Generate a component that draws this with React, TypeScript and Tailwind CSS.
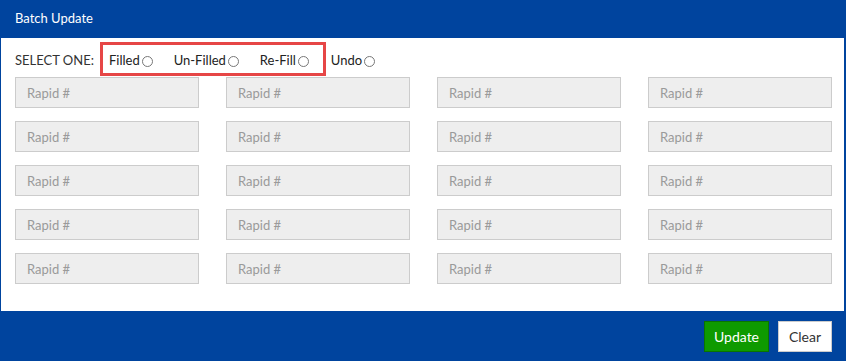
const rows = 5;
const cols = 4;

function RadioOption({ label }: { label: string }) {
  return (
    <label className="flex items-center gap-[2px] text-[13px] text-[#222] pt-[4px]">
      <span>{label}</span>
      <span className="inline-block w-[11px] h-[11px] rounded-full border border-[#777] bg-white" />
    </label>
  );
}

export default function App() {
  return (
    <div
      className="w-[846px] h-[361px] bg-[#00449e] flex flex-col"
      style={{ fontFamily: "Lato, 'Liberation Sans', sans-serif" }}
    >
      <div className="h-[38px] flex items-center px-[15px] text-white text-[13px]">
        Batch Update
      </div>
      <div className="flex-1 bg-white ml-[1px] mr-[2px] pl-[14px] pt-[4px]">
        <div className="flex items-center h-[34px]">
          <span className="text-[13px] text-[#333] mr-[6px] pt-[4px]">SELECT ONE:</span>
          <div className="flex items-center h-[34px] border-[3px] border-[#e64646] pl-[6px] pr-[14px] gap-[21px]">
            <RadioOption label="Filled" />
            <RadioOption label="Un-Filled" />
            <RadioOption label="Re-Fill" />
          </div>
          <div className="ml-[5px]">
            <RadioOption label="Undo" />
          </div>
        </div>
        <div className="grid grid-cols-[repeat(4,184px)] gap-x-[27px] gap-y-[13px] mt-[1px]">
          {Array.from({ length: rows * cols }).map((_, i) => (
            <input
              key={i}
              placeholder="Rapid #"
              className="h-[31px] w-[184px] bg-[#eeeeee] border border-[#cccccc] px-[11px] text-[13px] text-[#333] placeholder:text-[#9a9a9a] outline-none"
            />
          ))}
        </div>
      </div>
      <div className="h-[50px] flex items-center justify-end gap-[9px] pr-[14px]">
        <button className="h-[31px] w-[65px] bg-[#0e9a00] border border-[#0a7500] text-white text-[14px]">
          Update
        </button>
        <button className="h-[31px] w-[54px] bg-white border border-[#cccccc] text-[#333] text-[14px]">
          Clear
        </button>
      </div>
    </div>
  );
}
